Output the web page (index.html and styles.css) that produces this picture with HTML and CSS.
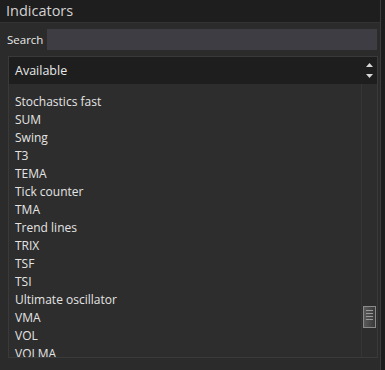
FILE: index.html
```html
<!DOCTYPE html>
<html lang="en">

<head>
    <meta charset="UTF-8">
    <title>Indicators</title>
    <link rel="stylesheet" href="styles.css">
</head>

<body>
    <div class="window">
        <div class="title">Indicators</div>

        <div class="search-row">
            <label class="search-label" for="q">Search</label>
            <div class="search-input" id="q"></div>
        </div>

        <div class="listbox">
            <div class="list-header">
                <span class="header-text">Available</span>
                <div class="spin">
                    <svg width="9" height="6" viewBox="0 0 9 6"><path d="M4.5 1 L8 5 L1 5 Z" fill="#d8d8d8"/></svg>
                    <svg width="9" height="6" viewBox="0 0 9 6"><path d="M1 1 L8 1 L4.5 5 Z" fill="#d8d8d8"/></svg>
                </div>
            </div>
            <div class="list-body">
                <ul class="items">
                    <li>Stochastics fast</li>
                    <li>SUM</li>
                    <li>Swing</li>
                    <li>T3</li>
                    <li>TEMA</li>
                    <li>Tick counter</li>
                    <li>TMA</li>
                    <li>Trend lines</li>
                    <li>TRIX</li>
                    <li>TSF</li>
                    <li>TSI</li>
                    <li>Ultimate oscillator</li>
                    <li>VMA</li>
                    <li>VOL</li>
                    <li>VOLMA</li>
                </ul>
                <div class="scrollbar">
                    <div class="thumb">
                        <span></span><span></span><span></span><span></span>
                    </div>
                </div>
            </div>
        </div>
    </div>
</body>

</html>
```
FILE: styles.css
```css
* {
    margin: 0;
    padding: 0;
    box-sizing: border-box;
}

body {
    background: #1c1c1c;
    font-family: "Open Sans", "Noto Sans", sans-serif;
    color: #e6e6e6;
}

.window {
    width: 381px;
    height: 370px;
    background: #2b2b2b;
    border-right: 1px solid #3c3c3c;
}

/* title bar */
.title {
    height: 23px;
    background: #1e1e1e;
    border-bottom: 1px solid #333333;
    padding-left: 6px;
    font-size: 14.5px;
    line-height: 22px;
    color: #d2d2d2;
}

/* search */
.search-row {
    display: flex;
    align-items: center;
    gap: 4px;
    padding: 5px 3px 0 7px;
    height: 28px;
}

.search-label {
    font-size: 11.5px;
    color: #e8e8e8;
}

.search-input {
    flex: 1;
    height: 21px;
    background: #3d3d43;
}

/* list */
.listbox {
    margin: 5px 0 0 8px;
    width: 370px;
    height: 302px;
    border: 1px solid #3a3a3a;
    border-top: none;
    display: flex;
    flex-direction: column;
}

.list-header {
    height: 28px;
    background: #1e1e1e;
    border-top: 1px solid #3a3a3a;
    display: flex;
    align-items: center;
    justify-content: space-between;
    padding-left: 6px;
}

.header-text {
    font-size: 12.5px;
    color: #e8e8e8;
}

.spin {
    width: 16px;
    height: 100%;
    display: flex;
    flex-direction: column;
    align-items: center;
    justify-content: center;
    gap: 5px;
}

.list-body {
    flex: 1;
    display: flex;
    overflow: hidden;
    background: #2d2d2d;
}

.items {
    flex: 1;
    list-style: none;
    padding: 9px 0 0 6px;
    font-size: 12px;
    line-height: 18px;
    color: #e4e4e4;
}

.scrollbar {
    width: 16px;
    border-left: 1px solid #363636;
    position: relative;
}

.thumb {
    position: absolute;
    left: 1px;
    top: 222px;
    width: 13px;
    height: 22px;
    border: 1px solid #8a8a8a;
    background: linear-gradient(to right, #5a5a5a, #3a3a3a);
    display: flex;
    flex-direction: column;
    align-items: flex-end;
    gap: 2px;
    padding: 3px 2px 0 0;
}

.thumb span {
    width: 7px;
    height: 1px;
    background: #9a9a9a;
}
```
